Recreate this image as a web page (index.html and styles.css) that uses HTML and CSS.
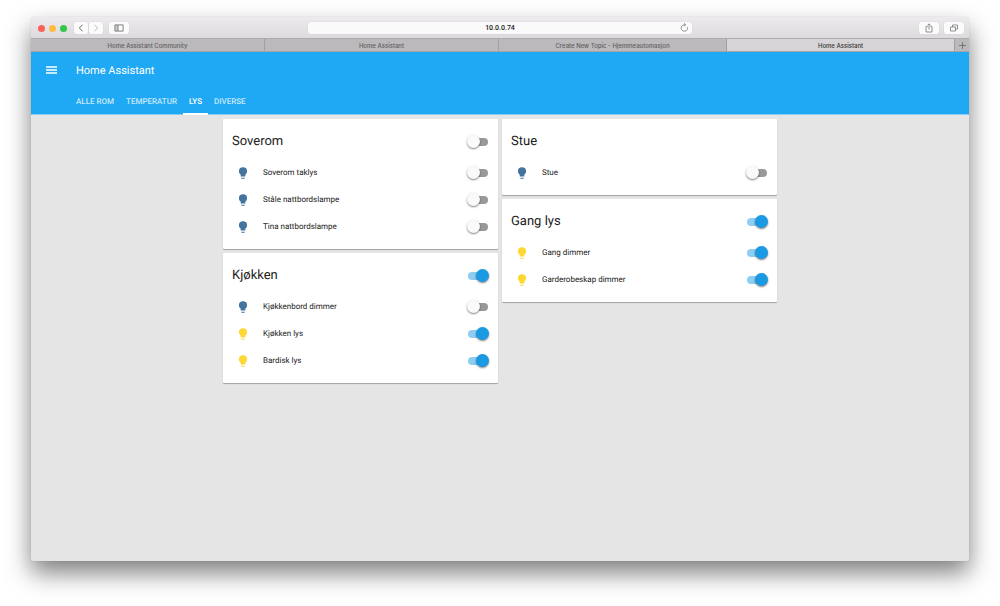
FILE: index.html
```html
<!DOCTYPE html>
<html lang="nb">
<head>
  <meta charset="UTF-8">
  <title>Home Assistant</title>
  <link rel="stylesheet" href="styles.css">
</head>

<body>

  <svg class="defs" aria-hidden="true">
    <symbol id="bulb" viewBox="0 0 24 24">
      <path d="M12 2a7 7 0 0 0-7 7c0 2.38 1.19 4.47 3 5.74V17a1 1 0 0 0 1 1h6a1 1 0 0 0 1-1v-2.26c1.81-1.27 3-3.36 3-5.74a7 7 0 0 0-7-7M9 21a1 1 0 0 0 1 1h4a1 1 0 0 0 1-1v-1H9v1z"/>
    </symbol>
  </svg>

  <div class="window">

    <div class="toolbar">
      <div class="tools">
        <div class="lights">
          <span class="light red"></span>
          <span class="light yellow"></span>
          <span class="light green"></span>
        </div>
        <div class="history">
          <button class="tool-btn" aria-label="Back">
            <svg width="8" height="10" viewBox="0 0 8 10"><path d="M5.5 1.8L2.3 5l3.2 3.2" stroke="#666"/></svg>
          </button>
          <button class="tool-btn" aria-label="Forward">
            <svg width="8" height="10" viewBox="0 0 8 10"><path d="M2.5 1.8L5.7 5 2.5 8.2" stroke="#bbb"/></svg>
          </button>
        </div>
        <button class="tool-btn wide" aria-label="Sidebar">
          <svg width="10" height="8" viewBox="0 0 10 8"><path d="M1 1h3v6H1z" fill="#ccc"/><path d="M.9 .9h8.200v6.200H.9zM4 1v6" stroke="#777" stroke-width=".9"/></svg>
        </button>
      </div>

      <div class="address">
        <input class="url" type="text" value="10.0.0.74" aria-label="Address">
        <button class="reload" aria-label="Reload">
          <svg width="9" height="9" viewBox="0 0 9 9"><path d="M7.500 4.200A3.200 3.200 0 1 1 4.500 1.800h1M4 .3l1.700 1.500L4 3.300" stroke="#777" stroke-width=".8"/></svg>
        </button>
      </div>

      <div class="tools right">
        <button class="tool-btn wide" aria-label="Share">
          <svg width="10" height="10" viewBox="0 0 10 10"><path d="M3.500 3.500H2v5.500h6V3.500H6.500M5 6.500V1M3.300 2.500L5 .8l1.700 1.700" stroke="#777" stroke-width=".8"/></svg>
        </button>
        <button class="tool-btn wide" aria-label="Show all tabs">
          <svg width="10" height="10" viewBox="0 0 10 10"><path d="M1.500 4h5v4h-5zM3.500 4V2h5v4h-2" stroke="#777" stroke-width=".8"/></svg>
        </button>
      </div>
    </div>

    <div class="browser-tabs">
      <button class="browser-tab">Home Assistant Community</button>
      <button class="browser-tab">Home Assistant</button>
      <button class="browser-tab">Create New Topic - Hjemmeautomasjon</button>
      <button class="browser-tab active">Home Assistant</button>
      <button class="new-tab" aria-label="New tab">
        <svg width="7" height="7" viewBox="0 0 7 7"><path d="M3.500 0v7M0 3.500h7" stroke="#666" stroke-width=".8"/></svg>
      </button>
    </div>

    <header class="app-header">
      <div class="app-bar">
        <button class="menu" aria-label="Menu">
          <svg width="11" height="8" viewBox="0 0 11 8"><path d="M0 1h11M0 4h11M0 7h11" stroke="#fff" stroke-width="1.400"/></svg>
        </button>
        <h1>Home Assistant</h1>
      </div>
      <nav>
        <a href="#">ALLE ROM</a>
        <a href="#">TEMPERATUR</a>
        <a href="#" class="active">LYS</a>
        <a href="#">DIVERSE</a>
      </nav>
    </header>

    <main>
      <div class="column">
        <section class="card">
          <div class="card-header">
            <h2>Soverom</h2>
            <input type="checkbox" class="switch" aria-label="Soverom">
          </div>
          <div class="row">
            <svg class="bulb"><use href="#bulb"/></svg>
            <label for="soverom-taklys">Soverom taklys</label>
            <input type="checkbox" class="switch" id="soverom-taklys">
          </div>
          <div class="row">
            <svg class="bulb"><use href="#bulb"/></svg>
            <label for="stale">Ståle nattbordslampe</label>
            <input type="checkbox" class="switch" id="stale">
          </div>
          <div class="row">
            <svg class="bulb"><use href="#bulb"/></svg>
            <label for="tina">Tina nattbordslampe</label>
            <input type="checkbox" class="switch" id="tina">
          </div>
        </section>

        <section class="card">
          <div class="card-header">
            <h2>Kjøkken</h2>
            <input type="checkbox" class="switch" aria-label="Kjøkken" checked>
          </div>
          <div class="row">
            <svg class="bulb"><use href="#bulb"/></svg>
            <label for="kjokkenbord">Kjøkkenbord dimmer</label>
            <input type="checkbox" class="switch" id="kjokkenbord">
          </div>
          <div class="row">
            <svg class="bulb on"><use href="#bulb"/></svg>
            <label for="kjokken-lys">Kjøkken lys</label>
            <input type="checkbox" class="switch" id="kjokken-lys" checked>
          </div>
          <div class="row">
            <svg class="bulb on"><use href="#bulb"/></svg>
            <label for="bardisk">Bardisk lys</label>
            <input type="checkbox" class="switch" id="bardisk" checked>
          </div>
        </section>
      </div>

      <div class="column">
        <section class="card">
          <div class="card-header">
            <h2>Stue</h2>
          </div>
          <div class="row">
            <svg class="bulb"><use href="#bulb"/></svg>
            <label for="stue">Stue</label>
            <input type="checkbox" class="switch" id="stue">
          </div>
        </section>

        <section class="card">
          <div class="card-header">
            <h2>Gang lys</h2>
            <input type="checkbox" class="switch" aria-label="Gang lys" checked>
          </div>
          <div class="row">
            <svg class="bulb on"><use href="#bulb"/></svg>
            <label for="gang">Gang dimmer</label>
            <input type="checkbox" class="switch" id="gang" checked>
          </div>
          <div class="row">
            <svg class="bulb on"><use href="#bulb"/></svg>
            <label for="garderobe">Garderobeskap dimmer</label>
            <input type="checkbox" class="switch" id="garderobe" checked>
          </div>
        </section>
      </div>
    </main>

  </div>

</body>
</html>
```

FILE: styles.css
```css
* {
  box-sizing: border-box;
}
body {
  margin: 0;
  padding: 17px 31px 45px;
  background: #fff;
  color: #212121;
  font-family: Roboto, sans-serif;
  text-rendering: geometricPrecision;
}
button {
  display: flex;
  align-items: center;
  justify-content: center;
  padding: 0;
  border: none;
  background: none;
  font: inherit;
  color: inherit;
}
svg {
  display: block;
  fill: none;
}
.defs {
  position: absolute;
  width: 0;
  height: 0;
}
.window {
  display: flex;
  flex-direction: column;
  min-height: calc(100vh - 62px);
  background: #e5e5e5;
  border-radius: 3px 3px 2px 2px;
  box-shadow: 0 0 1px rgba(0,0,0,0.2), 0 12px 25px rgba(0,0,0,0.5);
}

/* browser chrome */
.toolbar {
  display: grid;
  grid-template-columns: 1fr minmax(0, 384px) 1fr;
  align-items: center;
  height: 21px;
  padding: 1px 5px 0;
  background: linear-gradient(#eeebee, #dddadd);
  border-radius: 3px 3px 0 0;
}
.tools {
  display: flex;
  align-items: center;
  gap: 6px;
}
.tools.right {
  justify-content: flex-end;
  gap: 5px;
}
.lights {
  display: flex;
  gap: 4px;
  margin: 0 1px 0 2px;
}
.light {
  width: 7px;
  height: 7px;
  border-radius: 50%;
}
.red {
  background: #fc605b;
}
.yellow {
  background: #fdbc40;
}
.green {
  background: #33c748;
}
.history {
  display: flex;
  gap: 1px;
}
.tool-btn {
  width: 14px;
  height: 12px;
  background: #fbfbfb;
  border-radius: 2px;
  box-shadow: 0 0 1px rgba(0,0,0,0.2);
}
.wide {
  width: 20px;
}
.address {
  position: relative;
}
.url {
  display: block;
  width: 100%;
  height: 12px;
  padding: 0 14px;
  border: none;
  border-radius: 2px;
  background: #fafafa;
  box-shadow: 0 0 1px rgba(0,0,0,0.2);
  color: #222;
  font: 500 7px Roboto, sans-serif;
  text-align: center;
}
.reload {
  position: absolute;
  top: 1px;
  right: 3px;
}
.browser-tabs {
  display: flex;
  height: 14px;
  border-top: 1px solid #aeabae;
  border-bottom: 1px solid #a5a2a5;
  background: #bcb9bc;
  color: #605e60;
  font: 500 6px Inter, sans-serif;
}
.browser-tab {
  flex: 38;
  border-right: 1px solid #a29fa2;
}
.browser-tab:nth-child(-n+2) {
  flex: 39;
}
.browser-tab.active {
  background: #d6d4d6;
  color: #333;
}
.new-tab {
  width: 14px;
}

/* app header */
.app-header {
  height: 63px;
  background: #1fa8f3;
  border-bottom: 1px solid #8bcdf2;
  color: #fff;
}
.app-bar {
  display: flex;
  align-items: center;
  gap: 19px;
  height: 36px;
  padding-left: 15px;
}
h1 {
  margin: 0;
  font-size: 11px;
  font-weight: 400;
}
nav {
  display: flex;
  padding-left: 39px;
}
nav a {
  height: 27px;
  padding: 0 6px;
  border-bottom: 2px solid transparent;
  color: #c9e9fc;
  font-size: 8px;
  font-weight: 500;
  line-height: 27px;
  text-decoration: none;
}
nav a.active {
  border-color: #fff;
  color: #fff;
}

/* cards */
main {
  display: flex;
  justify-content: center;
  align-items: flex-start;
  gap: 4px;
  padding: 4px;
}
.column {
  display: flex;
  flex: 1;
  flex-direction: column;
  gap: 4px;
  max-width: 275px;
}
.card {
  padding: 0 9px 9px;
  background: #fff;
  border-radius: 1px;
  box-shadow: 0 1px 1px rgba(0,0,0,0.3);
}
.card-header {
  display: flex;
  align-items: center;
  justify-content: space-between;
  height: 40px;
  padding-top: 5px;
}
h2 {
  margin: 0;
  font-size: 13px;
  font-weight: 400;
}
.row {
  display: flex;
  align-items: center;
  height: 27px;
  padding-left: 4px;
  font-size: 8px;
}
.row label {
  flex: 1;
}
.bulb {
  width: 14px;
  height: 14px;
  margin-right: 13px;
  fill: #44739e;
}
.bulb.on {
  fill: #fdd835;
}
.switch {
  appearance: none;
  display: flex;
  align-items: center;
  position: relative;
  width: 22px;
  height: 13px;
  margin: 0;
}
.switch::before {
  content: "";
  position: absolute;
  left: 1px;
  width: 20px;
  height: 8px;
  border-radius: 4px;
  background: #999;
}
.switch::after {
  content: "";
  position: relative;
  width: 13px;
  height: 13px;
  border-radius: 50%;
  background: #fafafa;
  box-shadow: 0 1px 2px rgba(0,0,0,0.5);
}
.switch:checked {
  justify-content: flex-end;
}
.switch:checked::before {
  background: #8dcdf1;
}
.switch:checked::after {
  background: #1b9ae4;
}
```
